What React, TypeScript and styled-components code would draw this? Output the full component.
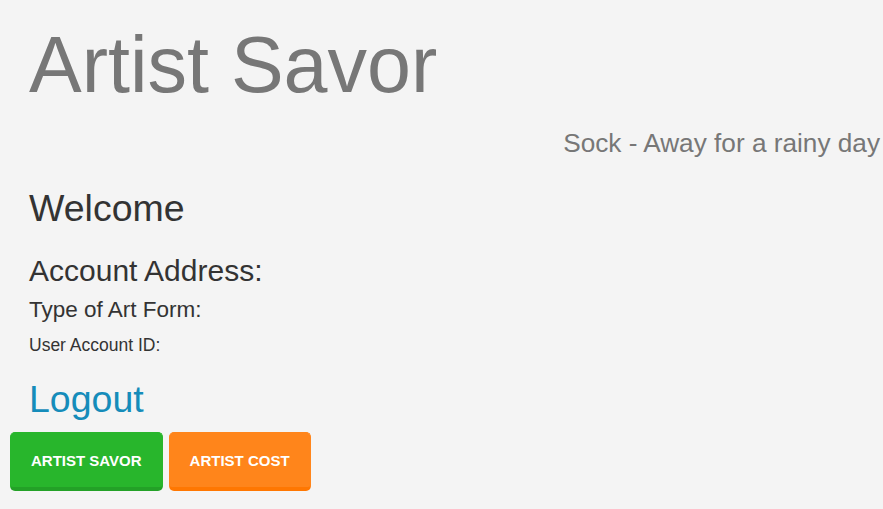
import React from "react";
import styled, { createGlobalStyle } from "styled-components";

const Global = createGlobalStyle`
  html, body {
    margin: 0;
    padding: 0;
    background: #f4f4f4;
    font-family: "Liberation Sans", Arial, sans-serif;
    color: #333333;
  }
`;

const Page = styled.div`
  display: flex;
  flex-direction: column;
  padding-top: 22px;
`;

const Header = styled.header`
  display: flex;
  flex-direction: column;
`;

const Title = styled.h1`
  margin: 0 0 0 29px;
  font-size: 79px;
  font-weight: 400;
  line-height: 1.1;
  color: #777777;
`;

const Tagline = styled.p`
  margin: 20px 3px 0 0;
  text-align: right;
  font-size: 26.2px;
  line-height: 1.1;
  color: #777777;
`;

const Account = styled.section`
  display: flex;
  flex-direction: column;
  align-items: flex-start;
  padding-left: 29px;
`;

const Heading = styled.div<{ $size: number; $gap: number }>`
  margin-top: ${(p) => p.$gap}px;
  font-size: ${(p) => p.$size}px;
  line-height: 1.1;
  color: #333333;
`;

const LogoutLink = styled.a`
  margin-top: 24px;
  font-size: 37.5px;
  line-height: 1.1;
  color: #158cba;
  text-decoration: none;
  cursor: pointer;
`;

const ButtonRow = styled.div`
  display: flex;
  gap: 6px;
  margin-top: 12px;
  padding-left: 10px;
`;

const Button = styled.button<{ $bg: string; $edge: string }>`
  font-family: "Liberation Sans", Arial, sans-serif;
  font-size: 15px;
  font-weight: 700;
  line-height: 1.1;
  text-transform: uppercase;
  color: #ffffff;
  background: ${(p) => p.$bg};
  border: 1px solid ${(p) => p.$bg};
  border-bottom: 4px solid ${(p) => p.$edge};
  border-radius: 5px;
  padding: 20px 20px 17px;
  cursor: pointer;
`;

export default function App() {
  return (
    <Page>
      <Global />
      <Header>
        <Title>Artist Savor</Title>
        <Tagline>Sock - Away for a rainy day</Tagline>
      </Header>
      <Account>
        <Heading $size={37.5} $gap={30}>Welcome</Heading>
        <Heading $size={30} $gap={25}>Account Address:</Heading>
        <Heading $size={22.5} $gap={11}>Type of Art Form:</Heading>
        <Heading $size={17.5} $gap={13}>User Account ID:</Heading>
        <LogoutLink>Logout</LogoutLink>
      </Account>
      <ButtonRow>
        <Button $bg="#28b62c" $edge="#23a127">Artist Savor</Button>
        <Button $bg="#ff851b" $edge="#ff7701">Artist Cost</Button>
      </ButtonRow>
    </Page>
  );
}
